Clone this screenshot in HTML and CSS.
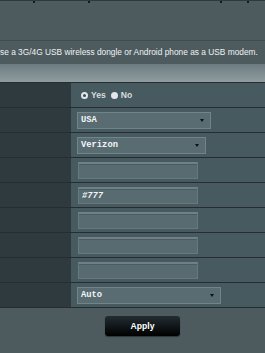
FILE: index.html
```html
<!DOCTYPE html>
<html>
<head>
<meta charset="utf-8">
<link rel="stylesheet" href="styles.css">
</head>
<body>
<div class="page">
  <div class="tabs">
    <span class="tab t1"></span>
    <span class="tab t2"></span>
    <span class="tab t3"></span>
    <span class="tab t4"></span>
  </div>
  <div class="top-space"></div>
  <p class="desc">Use a 3G/4G USB wireless dongle or Android phone as a USB modem.</p>
  <div class="thead"></div>
  <div class="form">
    <div class="row">
      <div class="label"></div>
      <div class="field">
        <label class="radio"><span class="dot on"></span>Yes</label>
        <label class="radio"><span class="dot"></span>No</label>
      </div>
    </div>
    <div class="row">
      <div class="label"></div>
      <div class="field"><div class="select w-usa"><span>USA</span><i class="arrow"></i></div></div>
    </div>
    <div class="row">
      <div class="label"></div>
      <div class="field"><div class="select w-isp"><span>Verizon</span><i class="arrow"></i></div></div>
    </div>
    <div class="row">
      <div class="label"></div>
      <div class="field"><input class="text" type="text" value=""></div>
    </div>
    <div class="row">
      <div class="label"></div>
      <div class="field"><input class="text" type="text" value="#777"></div>
    </div>
    <div class="row">
      <div class="label"></div>
      <div class="field"><input class="text" type="text" value=""></div>
    </div>
    <div class="row">
      <div class="label"></div>
      <div class="field"><input class="text" type="text" value=""></div>
    </div>
    <div class="row">
      <div class="label"></div>
      <div class="field"><input class="text" type="text" value=""></div>
    </div>
    <div class="row">
      <div class="label"></div>
      <div class="field"><div class="select w-auto"><span>Auto</span><i class="arrow"></i></div></div>
    </div>
  </div>
  <div class="actions">
    <button class="apply" type="button">Apply</button>
  </div>
</div>
</body>
</html>
```
FILE: styles.css
```css
html, body {
  margin: 0;
  padding: 0;
}
body {
  width: 265px;
  height: 353px;
  overflow: hidden;
  background: #4d5a5e;
  font-family: "Liberation Sans", Arial, sans-serif;
  color: #ffffff;
}
.page {
  display: flex;
  flex-direction: column;
}
.tabs {
  display: flex;
  height: 2px;
  border-top: 1px solid #2f393d;
}
.tab {
  box-sizing: border-box;
  height: 2px;
  border-right: 2px solid #151a1c;
}
.t1 { width: 35px; }
.t2 { width: 55px; }
.t3 { width: 132px; }
.t4 { width: 27px; }
.top-space {
  height: 37px;
  border-bottom: 1px solid #404c50;
}
.desc {
  margin: 0 0 0 -6px;
  height: 23px;
  line-height: 23px;
  font-size: 8.35px;
  white-space: nowrap;
  color: #eef2f3;
}
.thead {
  height: 18px;
  background: linear-gradient(#6c7b7f, #8f9da1);
  border-bottom: 1px solid #262e31;
}
.form {
  display: flex;
  flex-direction: column;
}
.row {
  display: flex;
  height: 24px;
  border-bottom: 1px solid #252d30;
}
.label {
  width: 71px;
  background: #2f3a3e;
}
.field {
  flex: 1;
  display: flex;
  align-items: center;
  padding-left: 6px;
  background: #475a5f;
}
.radio {
  display: flex;
  align-items: center;
  font-size: 8.6px;
  font-weight: bold;
  color: #d6dcde;
  margin-left: 4px;
  margin-right: 3px;
}
.radio + .radio {
  margin-left: 2px;
}
.dot {
  box-sizing: border-box;
  width: 7px;
  height: 7px;
  border-radius: 50%;
  background: #e2e6e8;
  margin-right: 3px;
}
.dot.on {
  border: 2px solid #e2e6e8;
  background: #3d4c50;
}
.select {
  box-sizing: border-box;
  height: 17px;
  display: flex;
  align-items: center;
  justify-content: space-between;
  padding: 0 6px 0 3px;
  background: #586c71;
  border: 1px solid #718589;
  font-family: "Liberation Mono", "DejaVu Sans Mono", monospace;
  font-weight: bold;
  font-size: 8.8px;
  color: #f2f5f6;
}
.w-usa { width: 134px; }
.w-isp { width: 129px; }
.w-auto { width: 144px; }
.arrow {
  width: 0;
  height: 0;
  border-left: 2.5px solid transparent;
  border-right: 2.5px solid transparent;
  border-top: 3.5px solid #0e1213;
}
.text {
  box-sizing: border-box;
  width: 120px;
  height: 17px;
  margin: 0 0 0 1px;
  padding: 0 3px;
  background: #576b70;
  border: 1px solid #667a7e;
  border-top: 2px solid #6f8185;
  box-shadow: inset 0 1px 0 #4b5c60;
  font-family: "Liberation Mono", "DejaVu Sans Mono", monospace;
  font-size: 8.8px;
  font-weight: bold;
  font-style: italic;
  color: #f2f5f6;
  outline: none;
}
.actions {
  padding: 7px 0 0 105px;
}
.apply {
  width: 75px;
  height: 20px;
  border: none;
  border-radius: 3px;
  background: linear-gradient(#232d31, #000000);
  box-shadow: 0 1px 1px rgba(0,0,0,0.4);
  color: #ffffff;
  font-family: "Liberation Sans", Arial, sans-serif;
  font-weight: bold;
  font-size: 8.6px;
  padding: 0;
}
```
